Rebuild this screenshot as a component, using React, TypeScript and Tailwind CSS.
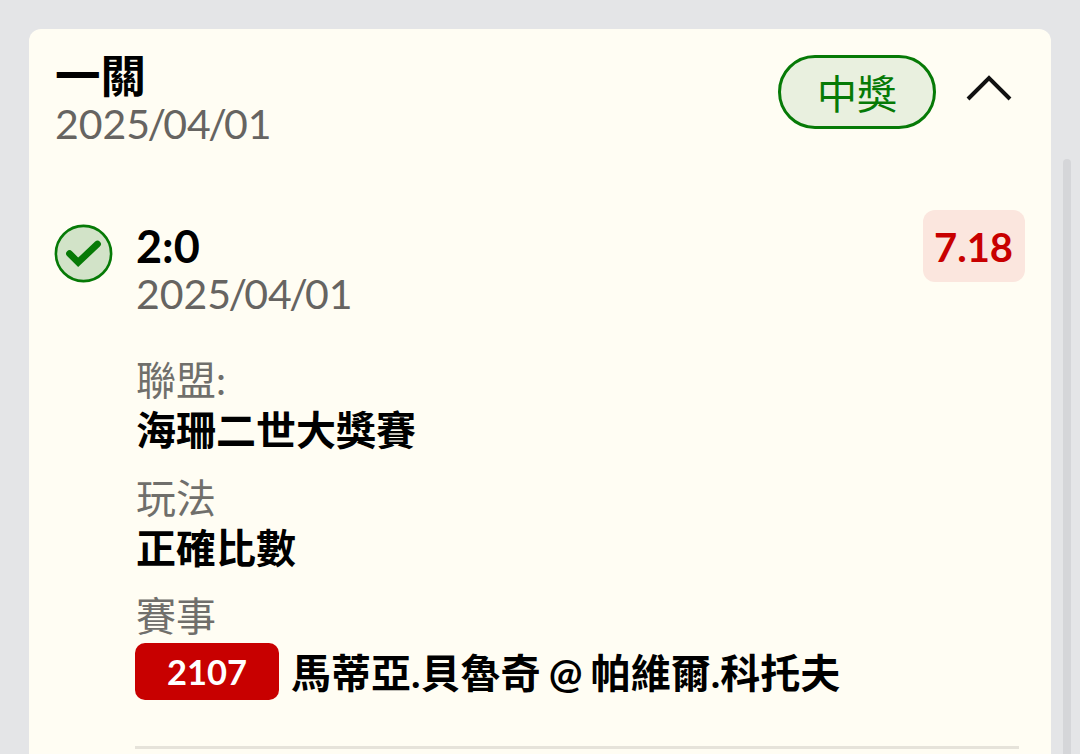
interface Field {
  label: string;
  value: string;
}

const fields: Field[] = [
  { label: "聯盟:", value: "海珊二世大獎賽" },
  { label: "玩法", value: "正確比數" },
];

// Slashes sit tight against the digits
const DateText = () => (
  <p className="h-[48px] text-[41px] leading-[48px] text-[#666461]">
    202
    <span className="tracking-[-2.7px]">5/</span>0
    <span className="tracking-[-2.7px]">4/</span>
    01
  </p>
);

const StatusIcon = () => (
  <svg className="mt-[14px] -ml-px size-[60px]" viewBox="0 0 60 60" fill="none">
    <circle cx="29.5" cy="29.5" r="27.6" fill="#d2e3c8" stroke="#067a06" strokeWidth="2.6" />
    <path d="M15.5 29.6L24.2 38.3L43.5 20" stroke="#067a06" strokeWidth="6.8" strokeLinecap="round" />
  </svg>
);

export default function App() {
  return (
    <div className="relative h-[754px] overflow-hidden bg-[#e4e5e7] px-[29px] pt-[29px] font-[Lato,'Noto_Sans_CJK_TC',sans-serif] text-black">
      <div className="h-[760px] rounded-t-xl bg-[#fffdf3] px-[26px]">
        {/* Header */}
        <div className="flex h-[181px] items-start justify-between pt-[26px]">
          <div>
            <h1 className="h-[45px] text-[45.5px] leading-[42px] font-bold">一關</h1>
            <DateText />
          </div>
          <div className="flex items-center">
            <div className="flex h-[74px] w-[158px] items-center justify-center rounded-full border-3 border-[#067a06] bg-[#e9f0df] pb-px text-[40px] text-[#067a06]">
              <span className="relative top-0.5">中獎</span>
            </div>
            <svg className="mr-3 mb-2 ml-[29px] h-[30px] w-[48px]" viewBox="0 0 48 30" fill="none">
              <path d="M3 26L24 5L45 26" stroke="#111" strokeWidth="4" />
            </svg>
          </div>
        </div>

        {/* Selection */}
        <div className="flex">
          <StatusIcon />
          <div className="ml-[22px] flex-1">
            <div className="flex h-[146px] justify-between">
              <div className="pt-[13px]">
                <h2 className="h-[47px] text-[45px] leading-[46px] font-bold">2:0</h2>
                <DateText />
              </div>
              <div className="flex h-[72px] w-[102px] items-center justify-center rounded-xl bg-[#fbe6de] pt-[2px] pr-px text-[40px] font-bold text-[#c80000]">
                7.18
              </div>
            </div>

            {fields.map((field) => (
              <div key={field.label} className="h-[118px]">
                <p className="h-[49px] text-[40px] leading-[49px] text-[#706f6b]">{field.label}</p>
                <p className="h-[50px] text-[40px] leading-[50px] font-bold">{field.value}</p>
              </div>
            ))}

            {/* Match */}
            <p className="h-[51px] text-[40px] leading-[49px] text-[#706f6b]">賽事</p>
            <div className="-ml-px flex h-[57px] items-center">
              <span className="flex h-[57px] w-[144px] shrink-0 items-center justify-center rounded-[10px] bg-[#c80000] text-[34.5px] font-bold text-white">
                2107
              </span>
              <span className="relative top-px ml-3 text-[40px] font-bold whitespace-nowrap [word-spacing:-1.5px]">
                馬蒂亞.貝魯奇 @ 帕維爾.科托夫
              </span>
            </div>
            <div className="mt-[46px] mr-[6px] -ml-px h-[3px] bg-[#e6e3da]" />
          </div>
        </div>
      </div>

      {/* Scrollbar */}
      <div className="absolute top-[159px] right-[9px] h-[620px] w-2 rounded-full bg-[#d5d6d9]" />
    </div>
  );
}
